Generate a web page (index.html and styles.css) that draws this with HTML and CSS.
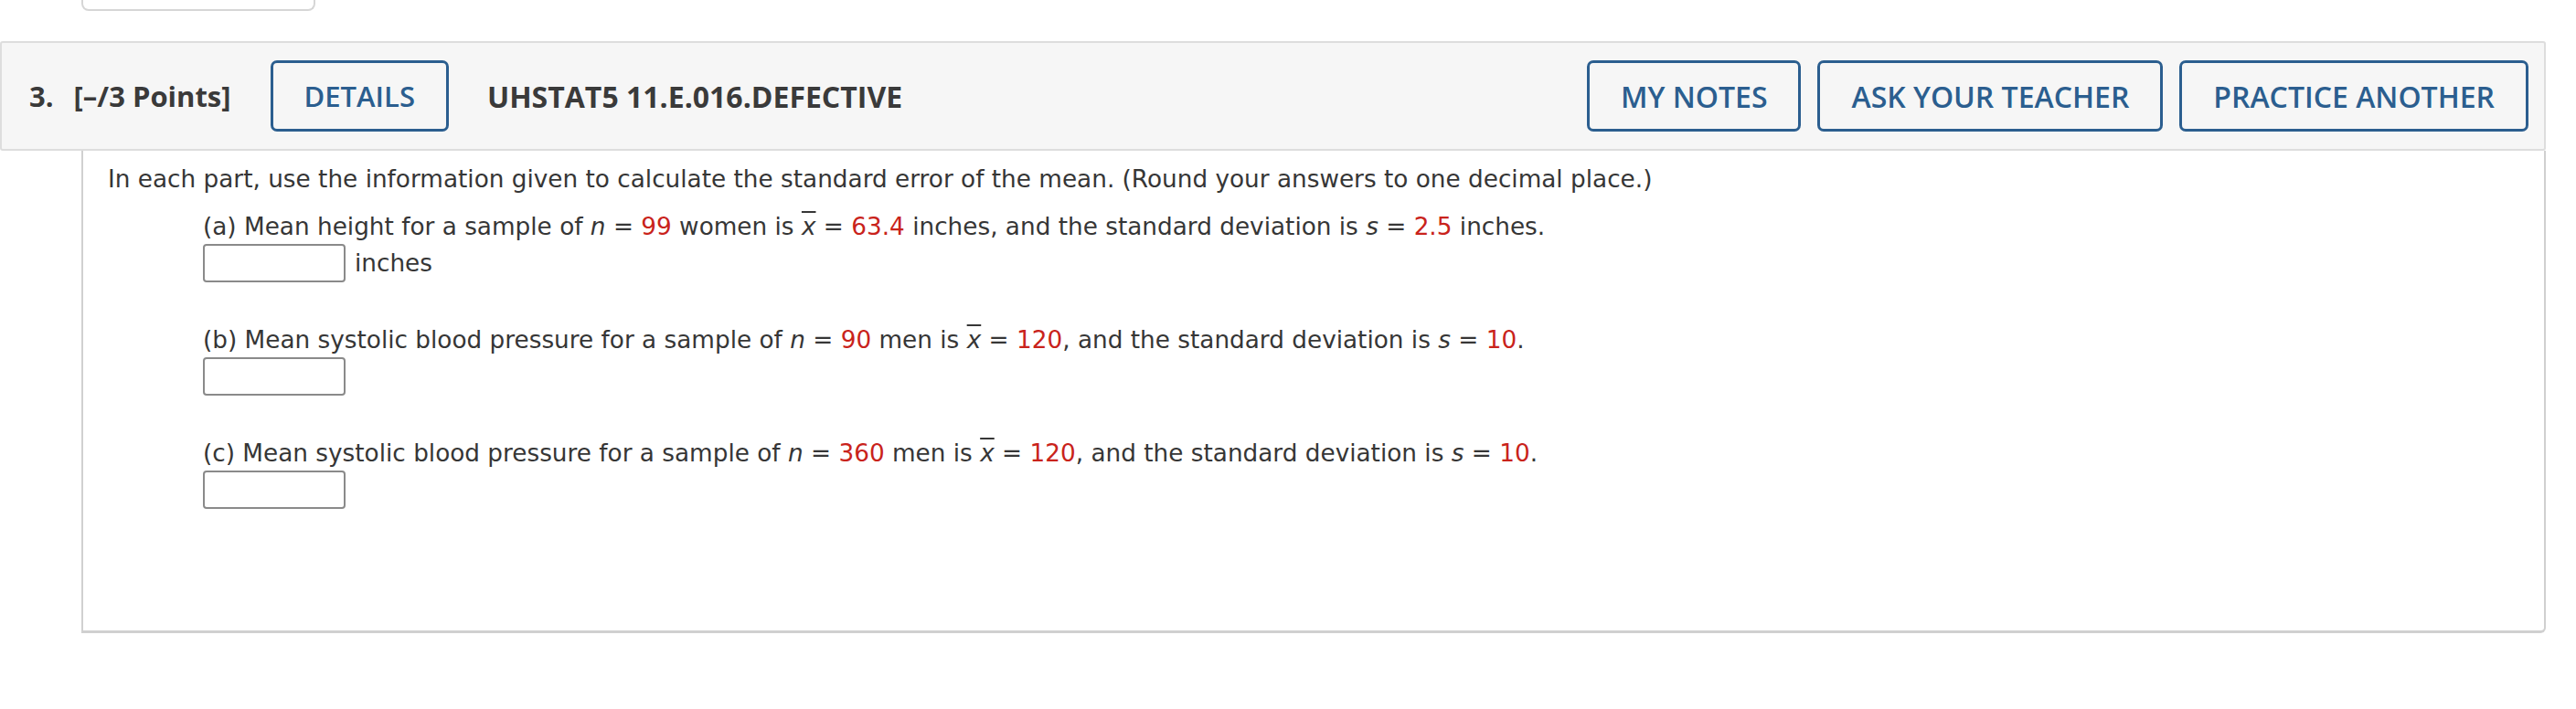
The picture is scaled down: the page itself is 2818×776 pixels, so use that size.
FILE: index.html
```html
<!DOCTYPE html>
<html lang="en">
<head>
<meta charset="utf-8">
<title>Question 3</title>
<link rel="stylesheet" href="styles.css">
</head>
<body>
<div class="stub"></div>
<div class="question">
  <div class="qhead">
    <span class="qnum">3.</span>
    <span class="qpts">[–/3 Points]</span>
    <button class="btn btn-details">DETAILS</button>
    <span class="qtitle">UHSTAT5 11.E.016.DEFECTIVE</span>
    <div class="actions">
      <button class="btn">MY NOTES</button>
      <button class="btn">ASK YOUR TEACHER</button>
      <button class="btn">PRACTICE ANOTHER</button>
    </div>
  </div>
  <div class="qbody">
    <p class="intro">In each part, use the information given to calculate the standard error of the mean. (Round your answers to one decimal place.)</p>
    <div class="part">
      <p class="ptext">(a) Mean height for a sample of <i>n</i> = <span class="red">99</span> women is <i class="bar">x</i> = <span class="red">63.4</span> inches, and the standard deviation is <i>s</i> = <span class="red">2.5</span> inches.</p>
      <div class="answer"><span class="box"></span><span class="unit">inches</span></div>
    </div>
    <div class="part">
      <p class="ptext">(b) Mean systolic blood pressure for a sample of <i>n</i> = <span class="red">90</span> men is <i class="bar">x</i> = <span class="red">120</span>, and the standard deviation is <i>s</i> = <span class="red">10</span>.</p>
      <div class="answer"><span class="box"></span></div>
    </div>
    <div class="part">
      <p class="ptext">(c) Mean systolic blood pressure for a sample of <i>n</i> = <span class="red">360</span> men is <i class="bar">x</i> = <span class="red">120</span>, and the standard deviation is <i>s</i> = <span class="red">10</span>.</p>
      <div class="answer"><span class="box"></span></div>
    </div>
  </div>
</div>
</body>
</html>
```
FILE: styles.css
```css
html, body {
  margin: 0;
  padding: 0;
  background: #ffffff;
}

.stub {
  margin-left: 89px;
  width: 256px;
  height: 12px;
  box-sizing: border-box;
  border: 2px solid #d6d6d6;
  border-top: none;
  border-radius: 0 0 8px 8px;
}

.question {
  margin-top: 33px;
  width: 2785px;
}

.qhead {
  box-sizing: border-box;
  height: 120px;
  display: flex;
  align-items: center;
  padding: 0 17px 0 30px;
  background: #f6f6f6;
  border: 2px solid #dddddd;
  border-radius: 3px;
  font-family: "Open Sans", "Liberation Sans", sans-serif;
  color: #3a3a3a;
}

.qnum {
  font-weight: 700;
  font-size: 31px;
}

.qpts {
  font-weight: 700;
  font-size: 31px;
  margin-left: 22px;
}

.qtitle {
  font-weight: 700;
  font-size: 32px;
  margin-left: 42px;
}

.btn {
  box-sizing: border-box;
  height: 78px;
  padding: 0 34px;
  border: 3px solid #2b5e8f;
  border-radius: 7px;
  background: transparent;
  color: #2b5e8f;
  font-family: "Open Sans", "Liberation Sans", sans-serif;
  font-weight: 600;
  font-size: 32px;
  display: flex;
  align-items: center;
  justify-content: center;
}

.btn-details {
  margin-left: 43px;
  font-size: 31px;
}

.actions {
  margin-left: auto;
  display: flex;
  gap: 18px;
}

.qbody {
  box-sizing: border-box;
  margin-left: 89px;
  height: 528px;
  border: 2px solid #d0d0d0;
  border-top: none;
  border-bottom-width: 3px;
  border-radius: 0 0 6px 0;
  padding: 13px 0 0 27px;
  font-family: "DejaVu Sans", Verdana, sans-serif;
  font-size: 26.3px;
  line-height: 36px;
  color: #363636;
}

.intro {
  margin: 0;
}

.part {
  margin: 16px 0 0 104px;
}

.part + .part {
  margin-top: 45px;
}

.ptext {
  margin: 0;
}

.red {
  color: #c9231b;
}

.bar {
  text-decoration: overline;
  text-decoration-thickness: 2px;
}

.answer {
  display: flex;
  align-items: center;
  margin-top: 1px;
}

.box {
  box-sizing: border-box;
  width: 156px;
  height: 42px;
  border: 2px solid #8a8a8a;
  border-radius: 4px;
  background: #fff;
}

.unit {
  line-height: 36px;
  margin-left: 10px;
}
```
